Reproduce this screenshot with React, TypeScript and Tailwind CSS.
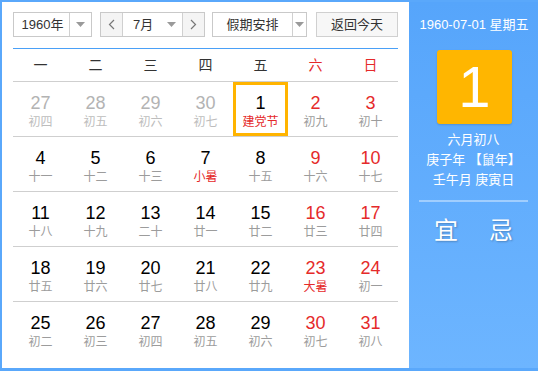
import React from "react";

type Cell = { d: number; l: string; gray?: boolean; red?: boolean; fest?: boolean; sel?: boolean };

const rows: Cell[][] = [
  [
    { d: 27, l: "初四", gray: true },
    { d: 28, l: "初五", gray: true },
    { d: 29, l: "初六", gray: true },
    { d: 30, l: "初七", gray: true },
    { d: 1, l: "建党节", fest: true, sel: true },
    { d: 2, l: "初九", red: true },
    { d: 3, l: "初十", red: true },
  ],
  [
    { d: 4, l: "十一" },
    { d: 5, l: "十二" },
    { d: 6, l: "十三" },
    { d: 7, l: "小暑", fest: true },
    { d: 8, l: "十五" },
    { d: 9, l: "十六", red: true },
    { d: 10, l: "十七", red: true },
  ],
  [
    { d: 11, l: "十八" },
    { d: 12, l: "十九" },
    { d: 13, l: "二十" },
    { d: 14, l: "廿一" },
    { d: 15, l: "廿二" },
    { d: 16, l: "廿三", red: true },
    { d: 17, l: "廿四", red: true },
  ],
  [
    { d: 18, l: "廿五" },
    { d: 19, l: "廿六" },
    { d: 20, l: "廿七" },
    { d: 21, l: "廿八" },
    { d: 22, l: "廿九" },
    { d: 23, l: "大暑", red: true, fest: true },
    { d: 24, l: "初一", red: true },
  ],
  [
    { d: 25, l: "初二" },
    { d: 26, l: "初三" },
    { d: 27, l: "初四" },
    { d: 28, l: "初五" },
    { d: 29, l: "初六" },
    { d: 30, l: "初七", red: true },
    { d: 31, l: "初八", red: true },
  ],
];

const weekdays = ["一", "二", "三", "四", "五", "六", "日"];

function Caret() {
  return (
    <svg width="9" height="5" viewBox="0 0 9 5">
      <path d="M0 0 L9 0 L4.5 5 Z" fill="#9a9a9a" />
    </svg>
  );
}

export default function App() {
  return (
    <div
      className="w-[538px] h-[371px] flex border-l-2 border-t-2 border-b-[3px] border-[#5aa8fb] bg-[#5aa8fb] overflow-hidden"
      style={{ fontFamily: '"Liberation Sans", "Noto Sans CJK SC", sans-serif' }}
    >
      <div className="w-[407px] h-full bg-white pl-[11px] pt-[10px] flex flex-col">
        {/* toolbar */}
        <div className="flex h-[25px] text-[13px] text-[#333]">
          <div className="w-[79px] h-[25px] flex border border-[#c9c9c9] bg-white">
            <div className="w-[55px] flex items-center justify-center pl-[2px]">1960年</div>
            <div className="flex-1 border-l border-[#d0d0d0] flex items-center justify-center">
              <Caret />
            </div>
          </div>
          <div className="ml-[8px] w-[105px] h-[25px] flex border border-[#c9c9c9]">
            <div className="w-[22px] bg-[#f4f4f4] flex items-center justify-center border-r border-[#d0d0d0]">
              <svg width="7" height="11" viewBox="0 0 7 11">
                <path d="M6 1 L1.5 5.5 L6 10" fill="none" stroke="#777" strokeWidth="1.2" />
              </svg>
            </div>
            <div className="flex-1 flex items-center pl-[10px]">
              <span className="w-[30px]">7月</span>
              <span className="ml-[4px] flex items-center">
                <Caret />
              </span>
            </div>
            <div className="w-[22px] bg-[#f4f4f4] flex items-center justify-center border-l border-[#d0d0d0]">
              <svg width="7" height="11" viewBox="0 0 7 11">
                <path d="M1 1 L5.5 5.5 L1 10" fill="none" stroke="#777" strokeWidth="1.2" />
              </svg>
            </div>
          </div>
          <div className="ml-[7px] w-[95px] h-[25px] flex border border-[#c9c9c9]">
            <div className="w-[79px] flex items-center justify-center">假期安排</div>
            <div className="flex-1 border-l border-[#d0d0d0] flex items-center justify-center">
              <Caret />
            </div>
          </div>
          <div className="ml-[9px] w-[82px] h-[25px] flex items-center justify-center border border-[#d0d0d0] bg-[#f7f7f7]">
            返回今天
          </div>
        </div>

        <div className="mt-[11px] w-[385px] h-px bg-[#4aa0f7]" />

        {/* weekday header */}
        <div className="w-[385px] h-[33px] grid grid-cols-7 border-b border-[#cfcfcf] text-[14px]">
          {weekdays.map((w, i) => (
            <div
              key={w}
              className={`flex items-center justify-center ${i >= 5 ? "text-[#e52a2a]" : "text-[#333]"}`}
            >
              {w}
            </div>
          ))}
        </div>

        {rows.map((r, ri) => (
          <div
            key={ri}
            className={`w-[385px] h-[55px] grid grid-cols-7 ${ri < 4 ? "border-b border-[#cfcfcf]" : ""}`}
          >
            {r.map((c, ci) => (
              <div
                key={ci}
                className={`h-[54px] flex flex-col items-center ${
                  c.sel ? "border-[3px] border-[#ffb400] pt-[8px]" : "pt-[11px]"
                }`}
              >
                <div
                  className={`text-[18px] leading-[20px] ${
                    c.gray ? "text-[#b3b3b3]" : c.red ? "text-[#e52a2a]" : "text-black"
                  }`}
                >
                  {c.d}
                </div>
                <div
                  className={`mt-[1px] text-[12px] leading-[16px] ${
                    c.fest ? "text-[#e52a2a]" : c.gray ? "text-[#bdbdbd]" : "text-[#9c9c9c]"
                  }`}
                >
                  {c.l}
                </div>
              </div>
            ))}
          </div>
        ))}
      </div>

      {/* right panel */}
      <div className="flex-1 h-full bg-gradient-to-b from-[#56a5fb] to-[#6db5ff] flex flex-col items-center text-white">
        <div className="mt-[14px] h-[18px] text-[13px] leading-[18px] ml-[1px]">1960-07-01 星期五</div>
        <div className="mt-[16px] ml-[2px] w-[75px] h-[74px] rounded-[3px] bg-[#ffb600] flex items-center justify-center text-[58px] font-light leading-none shadow-[0_1px_2px_rgba(0,0,0,0.15)]">
          1
        </div>
        <div className="mt-[6px] text-[13px] leading-[20px] flex flex-col items-center">
          <div>六月初八</div>
          <div>庚子年 【鼠年】</div>
          <div>壬午月 庚寅日</div>
        </div>
        <div className="mt-[10px] w-[109px] h-[2px] bg-white/40" />
        <div className="mt-[15px] flex gap-[31px] text-[24px] leading-[28px] [text-shadow:1px_1px_2px_rgba(0,0,0,0.25)]">
          <span>宜</span>
          <span>忌</span>
        </div>
      </div>
    </div>
  );
}
